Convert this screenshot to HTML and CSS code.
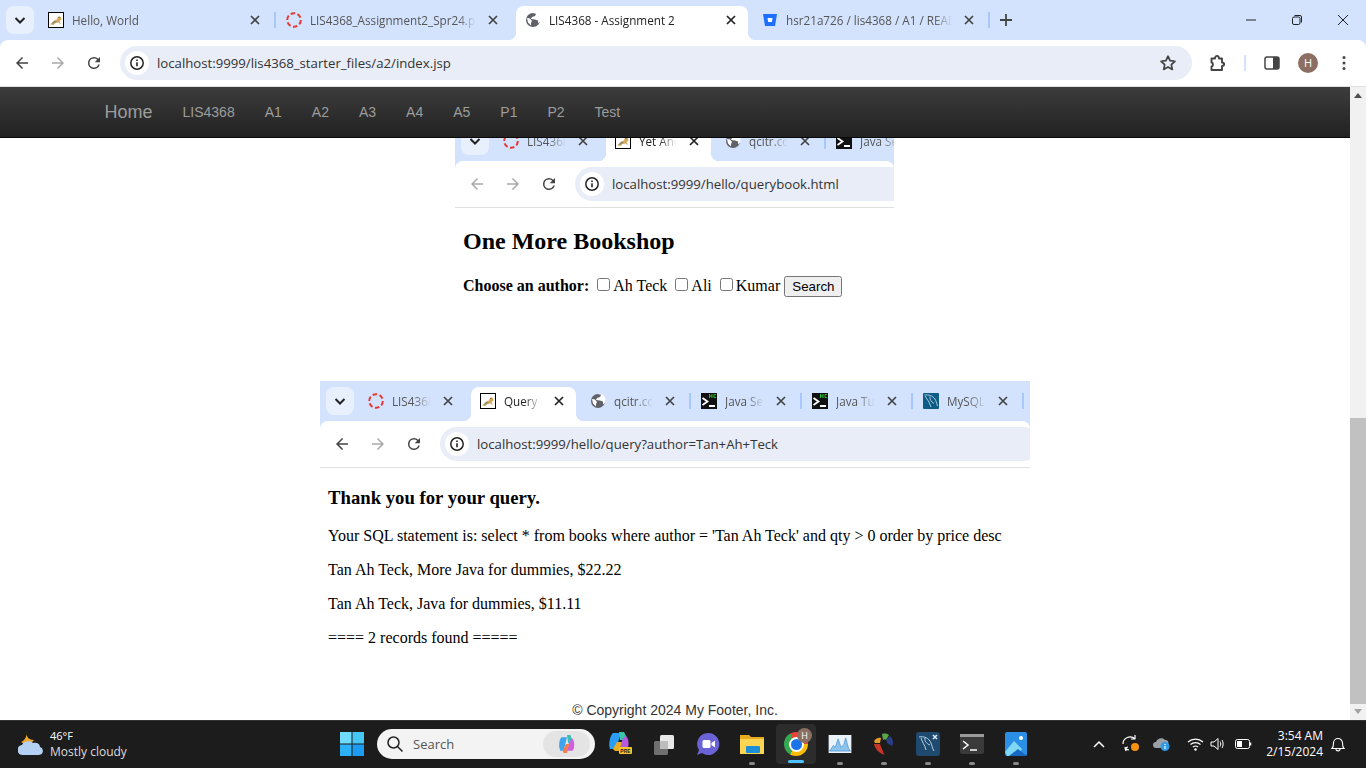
FILE: index.html
```html
<!DOCTYPE html>
<html lang="en">
<head>
<meta charset="utf-8">
<title>LIS4368 - Assignment 2</title>
<link rel="stylesheet" href="styles.css">
</head>
<body>

<svg class="defs" width="0" height="0" aria-hidden="true">
  <symbol id="i-down" viewBox="0 0 16 16"><path d="M3.500 6l4.500 4.500L12.500 6" fill="none" stroke="currentColor" stroke-width="2"/></symbol>
  <symbol id="i-x" viewBox="0 0 16 16"><path d="M4 4l8 8M12 4l-8 8" fill="none" stroke="currentColor" stroke-width="1.700"/></symbol>
  <symbol id="i-back" viewBox="0 0 24 24"><path d="M20 11H7.830l5.590-5.590L12 4l-8 8 8 8 1.410-1.410L7.830 13H20z" fill="currentColor"/></symbol>
  <symbol id="i-fwd" viewBox="0 0 24 24"><path d="M12 4l-1.410 1.410L16.170 11H4v2h12.170l-5.580 5.590L12 20l8-8z" fill="currentColor"/></symbol>
  <symbol id="i-reload" viewBox="0 0 24 24"><path d="M17.650 6.350A7.960 7.960 0 0 0 12 4a8 8 0 1 0 7.730 10h-2.080A6 6 0 1 1 12 6c1.660 0 3.140.69 4.220 1.780L13 11h7V4z" fill="currentColor"/></symbol>
  <symbol id="i-info" viewBox="0 0 16 16"><circle cx="8" cy="8" r="6.200" fill="none" stroke="currentColor" stroke-width="1.500"/><path d="M8 7.200v4M8 4.600v1.500" stroke="currentColor" stroke-width="1.600"/></symbol>
  <symbol id="fav-cat" viewBox="0 0 16 16"><rect x=".5" y=".5" width="15" height="15" fill="#fff" stroke="#000"/><path d="M2 12.500c2-1 3-3 4-4l3-1 1-3 1.500 1 1.500-1 .5 3-2 1.500 1.500 3.500-2.500-2-3 .5-2 2z" fill="#d3a85a"/><path d="M3 12l3-3 3 .5-2 1.500z" fill="#8c8c78"/><path d="M10 5.500l2-.5" stroke="#7a5a20" stroke-width=".8"/></symbol>
  <symbol id="fav-pdf" viewBox="0 0 16 16"><circle cx="8" cy="8" r="6.800" fill="none" stroke="#e53935" stroke-width="2" stroke-dasharray="4.600 2.500"/></symbol>
  <symbol id="fav-globe" viewBox="0 0 16 16"><circle cx="8" cy="8" r="7" fill="#5f6368"/><path d="M2 6l3 .5 2 2.500-1 2 0 2.500-3-3zM8 1.500l3 .5-1 2-3 1-1 2 4 .5 3 1 0 3 2-2 .5-4-2.500-4z" fill="#fff"/></symbol>
  <symbol id="fav-bit" viewBox="0 0 16 16"><path d="M1 2h14l-2 12H3z" fill="#1f6fff"/><path d="M5.500 6h5l-.6 4H6.100z" fill="#fff"/></symbol>
  <symbol id="fav-hc" viewBox="0 0 16 16"><rect width="16" height="16" fill="#111"/><path d="M1.500 5l5 3.500-5 3.500" fill="none" stroke="#fff" stroke-width="1.800"/><path d="M8 13h6" stroke="#fff" stroke-width="2"/><path d="M8.500 1v4M11 1v4M8.500 3H11M15 1.500h-2v3h2" fill="none" stroke="#2ecc40" stroke-width=".9"/></symbol>
  <symbol id="fav-mysql" viewBox="0 0 16 16"><rect width="16" height="16" rx="1" fill="#0d5c86"/><path d="M1.500 2c4-.5 8 .5 10.500 4 1 1.500 1.500 4 2.500 7M2 3l4 6 2 5M7 3.500c-.5 3 1 5 4 7" fill="none" stroke="#cfe6f2" stroke-width=".8"/></symbol>
</svg>

<header class="browser">
  <div class="tabstrip">
    <span class="tab-search"><svg class="ico-16"><use href="#i-down"/></svg></span>
    <div class="tab sep"><svg class="fav"><use href="#fav-cat"/></svg><span class="tab-title">Hello, World</span><svg class="tab-x"><use href="#i-x"/></svg></div>
    <div class="tab"><svg class="fav"><use href="#fav-pdf"/></svg><span class="tab-title">LIS4368_Assignment2_Spr24.pdf</span><svg class="tab-x"><use href="#i-x"/></svg></div>
    <div class="tab active"><svg class="fav"><use href="#fav-globe"/></svg><span class="tab-title">LIS4368 - Assignment 2</span><svg class="tab-x"><use href="#i-x"/></svg></div>
    <div class="tab sep"><svg class="fav"><use href="#fav-bit"/></svg><span class="tab-title">hsr21a726 / lis4368 / A1 / README.md</span><svg class="tab-x"><use href="#i-x"/></svg></div>
    <span class="tab-new"><svg width="14" height="14" viewBox="0 0 14 14"><path d="M7 1v12M1 7h12" stroke="currentColor" stroke-width="1.800"/></svg></span>
    <div class="win-controls">
      <span class="win-btn"><svg width="12" height="12" viewBox="0 0 12 12"><path d="M1 6h10" stroke="#222" stroke-width="1"/></svg></span>
      <span class="win-btn"><svg width="12" height="12" viewBox="0 0 12 12"><rect x="1.500" y="3" width="7.500" height="7.500" rx="1.500" fill="none" stroke="#222"/><path d="M3.500 1.500h5.500a1.500 1.500 0 0 1 1.500 1.500v5.500" fill="none" stroke="#222"/></svg></span>
      <span class="win-btn"><svg width="12" height="12" viewBox="0 0 12 12"><path d="M1 1l10 10M11 1L1 11" stroke="#222" stroke-width="1"/></svg></span>
    </div>
  </div>
  <div class="toolbar">
    <span class="tool"><svg class="ico-18"><use href="#i-back"/></svg></span>
    <span class="tool dim"><svg class="ico-18"><use href="#i-fwd"/></svg></span>
    <span class="tool"><svg class="ico-18"><use href="#i-reload"/></svg></span>
    <div class="omnibox">
      <span class="site-info"><svg class="ico-16"><use href="#i-info"/></svg></span>
      <span class="url">localhost:9999/lis4368_starter_files/a2/index.jsp</span>
      <svg class="star" width="18" height="18" viewBox="0 0 18 18"><path d="M9 2.200l2.050 4.500 4.900.55-3.650 3.300 1 4.850L9 12.950 4.700 15.400l1-4.850-3.650-3.300 4.900-.55z" fill="none" stroke="#444" stroke-width="1.700" stroke-linejoin="round"/></svg>
    </div>
    <span class="tool ext"><svg width="18" height="18" viewBox="0 0 18 18"><path d="M2.500 4.500h3.500c0-3.500 4-3.500 4 0h3v4c2.800 0 2.800 3.500 0 3.500v4h-10.500v-3.500c1.800 0 1.800-4 0-4z" fill="none" stroke="#444" stroke-width="1.900" stroke-linejoin="round"/></svg></span>
    <span class="tool-sep"></span>
    <span class="tool"><svg width="16" height="16" viewBox="0 0 16 16"><rect x="1" y="2" width="14" height="12" rx="2" fill="#fff" stroke="#444" stroke-width="1.500"/><path d="M9 2h4a2 2 0 0 1 2 2v8a2 2 0 0 1-2 2H9z" fill="#444"/></svg></span>
    <span class="tool"><span class="avatar">H</span></span>
    <span class="tool"><svg width="16" height="16" viewBox="0 0 16 16"><circle cx="8" cy="2.500" r="1.500" fill="#444"/><circle cx="8" cy="8" r="1.500" fill="#444"/><circle cx="8" cy="13.500" r="1.500" fill="#444"/></svg></span>
  </div>
</header>

<div class="viewport">
  <div class="page">
    <nav class="navbar">
      <a class="brand">Home</a>
      <a>LIS4368</a><a>A1</a><a>A2</a><a>A3</a><a>A4</a><a>A5</a><a>P1</a><a>P2</a><a>Test</a>
    </nav>
    <main class="content">

      <section class="shot shot-book">
        <div class="browser">
          <div class="tabstrip small">
            <span class="tab-search"><svg class="ico-16"><use href="#i-down"/></svg></span>
            <div class="tab"><svg class="fav"><use href="#fav-pdf"/></svg><span class="tab-title">LIS4368_Assign</span><svg class="tab-x"><use href="#i-x"/></svg></div>
            <div class="tab active"><svg class="fav"><use href="#fav-cat"/></svg><span class="tab-title">Yet Another</span><svg class="tab-x"><use href="#i-x"/></svg></div>
            <div class="tab sep"><svg class="fav"><use href="#fav-globe"/></svg><span class="tab-title">qcitr.com</span><svg class="tab-x"><use href="#i-x"/></svg></div>
            <div class="tab"><svg class="fav"><use href="#fav-hc"/></svg><span class="tab-title">Java Servlet</span><svg class="tab-x"><use href="#i-x"/></svg></div>
          </div>
          <div class="toolbar">
            <span class="tool dim"><svg class="ico-18"><use href="#i-back"/></svg></span>
            <span class="tool dim"><svg class="ico-18"><use href="#i-fwd"/></svg></span>
            <span class="tool"><svg class="ico-18"><use href="#i-reload"/></svg></span>
            <div class="omnibox">
              <span class="site-info"><svg class="ico-16"><use href="#i-info"/></svg></span>
              <span class="url">localhost:9999/hello/querybook.html</span>
            </div>
          </div>
        </div>
        <div class="shot-body">
          <h2>One More Bookshop</h2>
          <form class="search-form">
            <b>Choose an author:</b>
            <input type="checkbox"><span>Ah Teck</span>
            <input type="checkbox"><span>Ali</span>
            <input type="checkbox"><span>Kumar</span>
            <input type="button" value="Search">
          </form>
        </div>
      </section>

      <section class="shot shot-query">
        <div class="browser">
          <div class="tabstrip small">
            <span class="tab-search"><svg class="ico-16"><use href="#i-down"/></svg></span>
            <div class="tab"><svg class="fav"><use href="#fav-pdf"/></svg><span class="tab-title">LIS4368_Assign</span><svg class="tab-x"><use href="#i-x"/></svg></div>
            <div class="tab active"><svg class="fav"><use href="#fav-cat"/></svg><span class="tab-title">Query Response</span><svg class="tab-x"><use href="#i-x"/></svg></div>
            <div class="tab sep"><svg class="fav"><use href="#fav-globe"/></svg><span class="tab-title">qcitr.com</span><svg class="tab-x"><use href="#i-x"/></svg></div>
            <div class="tab sep"><svg class="fav"><use href="#fav-hc"/></svg><span class="tab-title">Java Servlet</span><svg class="tab-x"><use href="#i-x"/></svg></div>
            <div class="tab sep"><svg class="fav"><use href="#fav-hc"/></svg><span class="tab-title">Java Tutorial</span><svg class="tab-x"><use href="#i-x"/></svg></div>
            <div class="tab sep"><svg class="fav"><use href="#fav-mysql"/></svg><span class="tab-title">MySQL</span><svg class="tab-x"><use href="#i-x"/></svg></div>
          </div>
          <div class="toolbar">
            <span class="tool"><svg class="ico-18"><use href="#i-back"/></svg></span>
            <span class="tool dim"><svg class="ico-18"><use href="#i-fwd"/></svg></span>
            <span class="tool"><svg class="ico-18"><use href="#i-reload"/></svg></span>
            <div class="omnibox">
              <span class="site-info"><svg class="ico-16"><use href="#i-info"/></svg></span>
              <span class="url">localhost:9999/hello/query?author=Tan+Ah+Teck</span>
            </div>
          </div>
        </div>
        <div class="shot-body">
          <h3>Thank you for your query.</h3>
          <p>Your SQL statement is: select * from books where author = 'Tan Ah Teck' and qty &gt; 0 order by price desc</p>
          <p>Tan Ah Teck, More Java for dummies, $22.22</p>
          <p>Tan Ah Teck, Java for dummies, $11.11</p>
          <p>==== 2 records found =====</p>
        </div>
      </section>

      <footer class="page-footer">© Copyright 2024 My Footer, Inc.</footer>
    </main>
  </div>
  <aside class="scrollbar">
    <span class="arrow-up"></span>
    <span class="thumb"></span>
    <span class="arrow-down"></span>
  </aside>
</div>

<footer class="taskbar">
  <div class="weather">
    <svg width="26" height="24" viewBox="0 0 26 24"><path d="M9 0c-1 4 1 8 7 8-2 4-9 5-13 2 3-1 6-5 6-10z" fill="#f0a830"/><path d="M5 23a5 5 0 0 1-1-10c1-4 8-5 11-2 4-1 7 1 7 4 4 1 4 8-1 8z" fill="#b4d0f2"/></svg>
    <div class="weather-text"><span class="temp">46°F</span><span>Mostly cloudy</span></div>
  </div>
  <span class="win-logo"><svg width="24" height="24" viewBox="0 0 24 24"><rect width="11.500" height="11.500" fill="#6fdcfb"/><rect x="12.500" width="11.500" height="11.500" fill="#45c8f8"/><rect y="12.500" width="11.500" height="11.500" fill="#2eb0f6"/><rect x="12.500" y="12.500" width="11.500" height="11.500" fill="#1b9cf2"/></svg></span>
  <div class="searchbox">
    <svg width="18" height="18" viewBox="0 0 18 18"><circle cx="7.500" cy="7.500" r="5.500" fill="none" stroke="#222" stroke-width="1.500"/><path d="M11.500 11.500l5 5" stroke="#222" stroke-width="1.500"/></svg>
    <span>Search</span>
    <span class="search-copilot"><svg width="18" height="20" viewBox="0 0 16 18"><path d="M3 3h5L5 15H2C0 11 1 5 3 3z" fill="#3da5f0"/><path d="M8 1h3l3 7H9z" fill="#38c0b0"/><path d="M13 4c2 3 2 9 0 11H8l2-8z" fill="#d060e0"/><path d="M4 15l3-6h3l-2 8H5z" fill="#f08050"/></svg></span>
  </div>
  <div class="task-icons">
    <span class="task"><svg width="24" height="24" viewBox="0 0 24 24"><path d="M5 1h8L8 17H2C0 12 2 4 5 1z" fill="#2a9df4"/><path d="M11 0h5l4 8h-8z" fill="#3cc4a8"/><path d="M18 4c3 3 3 9 2 11H12l3-9z" fill="#b458e0"/><path d="M5 17l4-7h5l-3 9H7z" fill="#e8b020"/><rect x="11" y="15" width="13" height="7" rx="1" fill="#f7c62f"/><text x="17.500" y="21" class="pre">PRE</text></svg></span>
    <span class="task"><svg width="24" height="24" viewBox="0 0 24 24"><rect x="8" y="3" width="14" height="14" rx="1.500" fill="#e8e8e8"/><rect x="2" y="9" width="14" height="14" rx="1.500" fill="#6f6f6f"/><rect x="8" y="9" width="8" height="8" fill="#bdbdbd"/></svg></span>
    <span class="task"><svg width="24" height="24" viewBox="0 0 24 24"><path d="M12 1a11 11 0 1 1-6 20l-5 2 2-5A11 11 0 0 1 12 1z" fill="#6b62d6"/><rect x="6.500" y="8" width="8" height="8" rx="1.500" fill="#fff"/><path d="M15.500 11l3.500-2.500v7L15.500 13z" fill="#fff"/></svg></span>
    <span class="task pinned"><svg width="24" height="22" viewBox="0 0 24 22"><path d="M0 2h9l2 2h13v16H0z" fill="#e7ab1e"/><path d="M0 6h24v15H0z" fill="#fbd551"/><rect x="6" y="13" width="14" height="7" rx="1" fill="#1a8fd8"/></svg></span>
    <span class="task active-task">
      <span class="chrome-logo"><span class="chrome-core"></span></span>
      <span class="chrome-badge">H</span>
    </span>
    <span class="task pinned"><svg width="24" height="18" viewBox="0 0 24 19"><rect width="24" height="19" fill="#eaf3fb"/><path d="M1 17l4-6 2 2 3-9 3 9 3-3 2-7 3 11 2 3z" fill="#8cc3ee" stroke="#2f7fc4" stroke-width=".6"/></svg></span>
    <span class="task pinned"><svg width="24" height="24" viewBox="0 0 24 24"><path d="M10 2c3-1 6 0 7 1l-3 5c-1-1-2-1-3 0z" fill="#58a848"/><path d="M18 4c3 3 4 7 2 10l-5-3c0-1 0-2-1-3z" fill="#2a3f8a"/><path d="M2 9c2-3 5-4 7-3l-1 5H3z" fill="#e89a28"/><path d="M2 12h6c1 3 2 5 3 7 0 2 1 3 2 4C7 21 3 17 2 12z" fill="#c8362a"/></svg></span>
    <span class="task pinned"><svg width="24" height="24" viewBox="0 0 24 24"><rect width="24" height="24" rx="3" fill="#1d4a6e"/><path d="M3 5c5-1 10 1 12 6 1 2 1 5 3 8M5 6c1 4 4 7 5 12M9 6c-1 3 2 6 5 7" fill="none" stroke="#b8d4e6" stroke-width="1"/><path d="M17 3l4 4M21 3l-4 4" stroke="#dfeaf2" stroke-width="1.500"/></svg></span>
    <span class="task pinned"><svg width="24" height="20" viewBox="0 0 24 20"><rect width="24" height="20" rx="2" fill="#3a3a3a"/><rect width="24" height="3" fill="#9a9a9a"/><path d="M3 7l5 4-5 4" fill="none" stroke="#fff" stroke-width="1.500"/><path d="M10 16h7" stroke="#fff" stroke-width="1.500"/></svg></span>
    <span class="task pinned"><svg width="22" height="24" viewBox="0 0 22 24"><rect width="22" height="24" rx="2" fill="#2b8fe8"/><circle cx="16" cy="6" r="2" fill="#fff"/><path d="M0 20l9-11 8 8-4 7H2z" fill="#7fd8f6"/><path d="M4 24l9-7 9 7z" fill="#1668c4"/></svg></span>
  </div>
  <div class="tray">
    <span class="tray-item wide"><svg width="12" height="8" viewBox="0 0 12 8"><path d="M1 7l5-5 5 5" fill="none" stroke="#fff" stroke-width="1.500"/></svg></span>
    <span class="tray-item wide"><svg width="20" height="20" viewBox="0 0 20 20"><path d="M2 10a7 7 0 0 1 12-5M14 1v4h-4M5 17l-1-3 3-1M4 14c1 1 2 2 4 2" fill="none" stroke="#fff" stroke-width="1.200"/><circle cx="14" cy="13" r="4" fill="#f7930e"/></svg></span>
    <span class="tray-item cloud"><svg width="18" height="16" viewBox="0 0 18 16"><path d="M3 12a3 3 0 0 1 0-6c1-4 7-5 9-2 3 0 4 2 3 4l-4 4z" fill="#9aa0a6"/><circle cx="12" cy="10.500" r="4.500" fill="#2f9be8"/><path d="M12 10v3M12 8v1" stroke="#fff" stroke-width="1.200"/></svg></span>
    <span class="tray-item net"><svg width="17" height="14" viewBox="0 0 17 14"><path d="M1 5a11 11 0 0 1 15 0M3.500 7.500a7.500 7.500 0 0 1 10 0M6 10a4 4 0 0 1 5 0" fill="none" stroke="#fff" stroke-width="1.200"/><circle cx="8.500" cy="12.500" r="1.200" fill="#fff"/></svg></span>
    <span class="tray-item vol"><svg width="16" height="14" viewBox="0 0 16 14"><path d="M1 5h3l4-3.500v11L4 9H1z" fill="none" stroke="#fff" stroke-width="1"/><path d="M10 4.500c1 1.500 1 3.500 0 5M12 3c1.500 2 1.500 6 0 8" fill="none" stroke="#fff" stroke-width="1"/></svg></span>
    <span class="tray-item batt"><svg width="17" height="10" viewBox="0 0 17 10"><rect x=".5" y=".5" width="14" height="9" rx="2" fill="none" stroke="#fff"/><rect x="2" y="2" width="5" height="6" fill="#fff"/><path d="M15.500 3.500v3" stroke="#fff" stroke-width="1.500"/></svg></span>
    <div class="clock"><span>3:54 AM</span><span>2/15/2024</span></div>
    <span class="bell"><svg width="16" height="16" viewBox="0 0 16 16"><path d="M2 12.500c1.500-1.500 1.500-3 1.500-5.500a4.500 4.500 0 0 1 9 0c0 2.500 0 4 1.500 5.500zM6 13c0 2.500 4 2.500 4 0" fill="none" stroke="#fff" stroke-width="1.100"/></svg></span>
  </div>
</footer>

</body>
</html>
```

FILE: styles.css
```css
html, body {margin: 0; padding: 0; overflow: hidden;}
body {width: 1366px; height: 768px; display: flex; flex-direction: column; background: #fff; color: #000; font-family: 'Liberation Serif', serif; font-size: 16px;}
.defs {position: absolute;}
svg {display: block; flex-shrink: 0;}
.ico-16 {width: 16px; height: 16px;}
.ico-18 {width: 18px; height: 18px;}

/* chrome window frame, also used by the pasted screenshots */
.browser {background: #d3e3fd; font-family: 'Open Sans', sans-serif; flex-shrink: 0;}
.tabstrip {display: flex; height: 40px; padding-left: 6px; color: #555; font-size: 11.7px;}
.tab-search {flex: none; width: 28px; height: 28px; margin: 6px 5px 0 0; border-radius: 8px; background: #e9f0fd; color: #222; display: flex; align-items: center; justify-content: center;}
.tab {position: relative; flex: none; box-sizing: border-box; width: 238px; height: 34px; margin-top: 6px; padding: 0 14px 6px 9px; display: flex; align-items: center;}
.small .tab {width: 111px;}
.fav {width: 16px; height: 16px; margin-right: 8px;}
.tab-title {flex: 1; min-width: 0; margin-right: 9px; white-space: nowrap; overflow: hidden; -webkit-mask-image: linear-gradient(to left, transparent 0, #000 18px);}
.tab-x {width: 16px; height: 16px; color: #444;}
.tab.sep::after {content: ""; position: absolute; right: 1px; top: 6px; width: 2px; height: 16px; background: #a8c7fa;}
.tab.active {width: 232px; margin-left: 1px; margin-right: 5px; padding: 0 9px 6px 9px; background: #fff; border-radius: 8px 8px 0 0; color: #222;}
.small .tab.active {width: 105px;}
.tab.active .tab-x {color: #222;}
.tab.active::before, .tab.active::after {content: ""; position: absolute; bottom: 0; width: 8px; height: 8px;}
.tab.active::before {left: -8px; background: radial-gradient(circle at 0 0, transparent 8px, #fff 8.5px);}
.tab.active::after {right: -8px; background: radial-gradient(circle at 100% 0, transparent 8px, #fff 8.5px);}
.tab-new {flex: none; width: 28px; margin-left: 1px; height: 40px; display: flex; align-items: center; justify-content: center; color: #444;}
.win-controls {margin-left: auto; display: flex;}
.win-btn {width: 46px; height: 40px; display: flex; align-items: center; justify-content: center;}

.toolbar {display: flex; align-items: center; box-sizing: border-box; height: 47px; padding: 0 4px 1px; background: #fff; border-radius: 8px 8px 0 0; border-bottom: 1px solid #e0e0e0;}
.tool {flex: none; width: 36px; height: 34px; display: flex; align-items: center; justify-content: center; color: #444;}
.tool.dim {color: #aaa;}
.tool.ext {margin-left: 8px;}
.tool-sep {flex: none; width: 2px; height: 16px; margin: 0 8px; background: #d3e3fd;}
.avatar {width: 20px; height: 20px; border-radius: 50%; background: #8d6e63; color: #fff; font-size: 11px; line-height: 20px; text-align: center;}
.omnibox {flex: 1; min-width: 0; height: 34px; margin-left: 8px; border-radius: 17px; background: #e9edf7; display: flex; align-items: center;}
.site-info {flex: none; width: 24px; height: 24px; margin-left: 5px; border-radius: 50%; background: #fff; color: #222; display: flex; align-items: center; justify-content: center;}
.url {margin-left: 8px; font-size: 13.2px; color: #333; white-space: nowrap;}
.star {margin-left: auto; margin-right: 15px;}
.shot .omnibox {flex: none; width: 600px;}
.shot .toolbar {overflow: hidden;}

/* page inside the window */
.viewport {flex: 1; min-height: 0; display: flex;}
.page {flex: 1; min-width: 0; display: flex; flex-direction: column;}
.navbar {position: relative; z-index: 2; flex: none; box-sizing: border-box; height: 51px; padding-left: 89.5px; display: flex; align-items: center; background: linear-gradient(#3c3c3c, #222); border-bottom: 1px solid #080808; font-family: 'Liberation Sans', sans-serif; font-size: 14px; color: #9d9d9d;}
.navbar a {padding: 0 15px;}
.navbar .brand {font-size: 18px; color: #9d9d9d;}
.content {flex: 1; min-height: 0; margin-top: -17px; display: flex; flex-direction: column; align-items: center;}
.shot {overflow: hidden; flex: none;}
.shot-book {width: 439px; margin-right: 1px;}
.shot-query {width: 710px; margin-top: 84px;}
.shot-body {padding: 0 8px;}
h2 {font-size: 24px; margin: 20px 0;}
h3 {font-size: 18.72px; margin: 18.72px 0;}
p {margin: 16px 0;}
.page-footer {margin-top: 37px; font-family: 'Liberation Sans', sans-serif; font-size: 14px; line-height: 20px; color: #333;}

.scrollbar {flex: none; width: 16px; background: #f1f1f1; display: flex; flex-direction: column; align-items: center;}
.arrow-up {width: 0; height: 0; margin-top: 6px; border: 4px solid transparent; border-top: 0; border-bottom: 5px solid #505050;}
.thumb {width: 16px; height: 286px; margin-top: 320px; background: #c1c1c1;}
.arrow-down {width: 0; height: 0; margin-top: 5px; border: 4px solid transparent; border-bottom: 0; border-top: 5px solid #a3a3a3;}

/* windows taskbar */
.taskbar {flex: none; box-sizing: border-box; height: 48px; padding-bottom: 1px; display: flex; align-items: center; background: #1c1c1c; border-top: 1px solid #333; color: #fff; font-family: 'Open Sans', sans-serif; font-size: 12px;}
.weather {flex: none; width: 332px; box-sizing: border-box; padding-left: 18px; display: flex; align-items: center; gap: 6px;}
.weather-text {display: flex; flex-direction: column; line-height: 16px; color: #ddd;}
.temp {color: #fff; font-size: 11px;}
.win-logo {flex: none; width: 40px; display: flex; justify-content: center;}
.searchbox {flex: none; box-sizing: border-box; width: 218px; height: 30px; margin-left: 5px; padding: 0 5px 0 9px; border-radius: 15px; background: #f3f3f3; color: #555; display: flex; align-items: center; gap: 9px; font-size: 13px;}
.search-copilot {margin-left: auto; width: 47px; height: 26px; border-radius: 13px; background: #e4e4e4; display: flex; align-items: center; justify-content: center;}
.task-icons {flex: none; margin-left: 3px; display: flex;}
.task {position: relative; width: 44px; height: 40px; display: flex; align-items: center; justify-content: center;}
.pre {font: bold 5px 'Liberation Sans', sans-serif; text-anchor: middle; fill: #222;}
.pinned::after {content: ""; position: absolute; left: 19px; bottom: -1px; width: 6px; height: 3px; border-radius: 2px; background: #8a8a8a;}
.active-task {width: 40px; margin: 0 2px; border-radius: 4px; background: #2c2c2c;}
.active-task::after {content: ""; position: absolute; left: 12px; bottom: 1px; width: 16px; height: 3px; border-radius: 2px; background: #4cc2ff;}
.chrome-logo {width: 24px; height: 24px; border-radius: 50%; background: conic-gradient(from -30deg, #ea4335 0 120deg, #fbbc04 120deg 240deg, #34a853 240deg 360deg); display: flex; align-items: center; justify-content: center;}
.chrome-core {width: 11px; height: 11px; border-radius: 50%; background: #1a73e8; border: 2px solid #fff;}
.chrome-badge {position: absolute; right: 4px; top: 4px; width: 15px; height: 15px; border-radius: 50%; background: #8d6e63; font-size: 9px; line-height: 15px; text-align: center;}
.tray {flex: none; margin-left: 45px; display: flex; align-items: center;}
.tray-item {display: flex; justify-content: center; align-items: center; height: 24px;}
.wide {width: 32px;}
.cloud {width: 30px;}
.net {width: 24px; margin-left: 6px;}
.vol {width: 22px;}
.batt {width: 28px;}
.clock {width: 66px; display: flex; flex-direction: column; align-items: flex-end; line-height: 16px; font-size: 12px;}
.bell {width: 20px; margin-left: 5px; display: flex; justify-content: center;}
```
